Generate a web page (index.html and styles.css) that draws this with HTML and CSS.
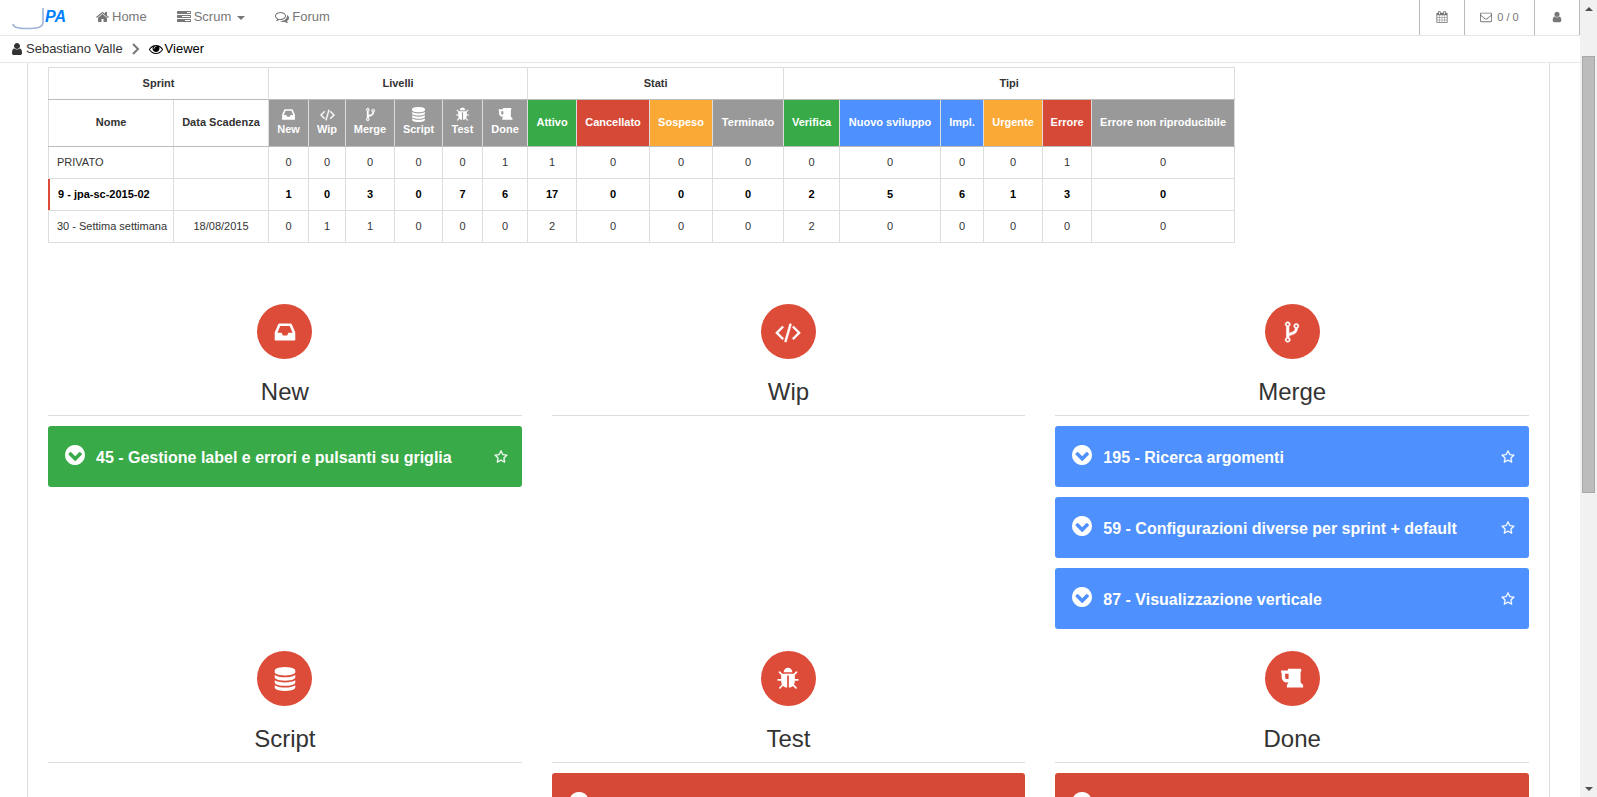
FILE: index.html
```html
<!DOCTYPE html>
<html lang="it">
<head>
<meta charset="utf-8">
<title>JPA - Viewer</title>
<link rel="stylesheet" href="styles.css">
</head>
<body>
<svg class="sprite" aria-hidden="true">
  <symbol id="home" viewBox="64 0 1664 1792"><path d="M1472 992v480q0 26-19 45t-45 19h-384v-384h-256v384h-384q-26 0-45-19t-19-45v-480q0-1 .5-3t.5-3l575-474 575 474q1 2 1 6zm223-69l-62 74q-8 9-21 11h-3q-13 0-21-7l-692-577-692 577q-12 8-24 7-13-2-21-11l-62-74q-8-10-7-23.5t11-21.5l719-599q32-26 76-26t76 26l244 204v-195q0-14 9-23t23-9h192q14 0 23 9t9 23v408l219 182q10 8 11 21.5t-7 23.5z"/></symbol>
  <symbol id="tasks" viewBox="0 0 1792 1792"><path d="M1024 1408h640v-128h-640v128zm-384-512h1024v-128h-1024v128zm640-512h384v-128h-384v128zm512 832v256q0 26-19 45t-45 19h-1664q-26 0-45-19t-19-45v-256q0-26 19-45t45-19h1664q26 0 45 19t19 45zm0-512v256q0 26-19 45t-45 19h-1664q-26 0-45-19t-19-45v-256q0-26 19-45t45-19h1664q26 0 45 19t19 45zm0-512v256q0 26-19 45t-45 19h-1664q-26 0-45-19t-19-45v-256q0-26 19-45t45-19h1664q26 0 45 19t19 45z"/></symbol>
  <symbol id="comments" viewBox="0 0 1792 1792"><path d="M704 384q-153 0-286 52t-211.5 141-78.5 191q0 82 53 158t149 132l97 56-35 84q34-20 62-39l44-31 53 10q78 14 153 14 153 0 286-52t211.500-141 78.500-191-78.500-191-211.500-141-286-52zm0-128q191 0 353.500 68.500t256.500 186.500 94 257-94 257-256.500 186.500-353.500 68.500q-86 0-176-16-124 88-278 128-36 9-86 16h-3q-11 0-20.500-8t-11.500-21q-1-3-1-6.500t.5-6.500 2-6l2.500-5 3.500-5.500 4-5 4.500-5 4-4.500q5-6 23-25t26-29.500 22.500-29 25-38.500 20.500-44q-124-72-195-177t-71-224q0-139 94-257t256.500-186.500 353.500-68.500zm822 1169q10 24 20.500 44t25 38.500 22.500 29 26 29.500 23 25q1 1 4 4.500t4.500 5 4 5 3.500 5.500l2.500 5 2 6 .5 6.500-1 6.500q-3 14-13 22t-22 7q-50-7-86-16-154-40-278-128-90 16-176 16-271 0-472-132 58 4 88 4 161 0 309-45t264-129q125-92 192-212t67-254q0-77-23-152 129 71 204 178t75 230q0 120-71 224.500t-195 176.500z"/></symbol>
  <symbol id="user" viewBox="256 0 1280 1792"><path d="M1536 1399q0 109-62.500 187t-150.500 78h-854q-88 0-150.500-78t-62.500-187q0-85 8.500-160.500t31.500-152 58.500-131 94-89 134.500-34.500q131 128 313 128t313-128q76 0 134.500 34.500t94 89 58.500 131 31.500 152 8.500 160.500zm-256-887q0 159-112.500 271.500t-271.500 112.500-271.500-112.500-112.500-271.500 112.500-271.500 271.500-112.500 271.500 112.500 112.500 271.500z"/></symbol>
  <symbol id="eye" viewBox="0 0 1792 1792"><path d="M1664 960q-152-236-381-353 61 104 61 225 0 185-131.500 316.500t-316.500 131.500-316.500-131.500-131.500-316.500q0-121 61-225-229 117-381 353 133 205 333.500 326.500t434.500 121.500 434.500-121.500 333.500-326.500zm-720-384q0-20-14-34t-34-14q-125 0-214.500 89.500t-89.500 214.500q0 20 14 34t34 14 34-14 14-34q0-86 61-147t147-61q20 0 34-14t14-34zm848 384q0 34-20 69-140 230-376.500 368.500t-499.500 138.500-499.500-139-376.500-368q-20-35-20-69t20-69q140-229 376.500-368t499.500-139 499.500 139 376.500 368q20 35 20 69z"/></symbol>
  <symbol id="calendar" viewBox="0 0 1792 1792"><path d="M192 1664h288v-288h-288v288zm352 0h320v-288h-320v288zm-352-352h288v-320h-288v320zm352 0h320v-320h-320v320zm-352-384h288v-288h-288v288zm736 736h320v-288h-320v288zm-384-736h320v-288h-320v288zm768 736h288v-288h-288v288zm-384-352h320v-320h-320v320zm-352-864v-288q0-13-9.500-22.500t-22.500-9.500h-64q-13 0-22.500 9.500t-9.500 22.500v288q0 13 9.500 22.500t22.500 9.500h64q13 0 22.500-9.500t9.500-22.500zm736 864h288v-320h-288v320zm-384-384h320v-288h-320v288zm384 0h288v-288h-288v288zm32-480v-288q0-13-9.500-22.500t-22.500-9.500h-64q-13 0-22.500 9.500t-9.500 22.500v288q0 13 9.500 22.500t22.500 9.500h64q13 0 22.500-9.500t9.500-22.500zm384-64v1280q0 52-38 90t-90 38h-1408q-52 0-90-38t-38-90v-1280q0-52 38-90t90-38h128v-96q0-66 47-113t113-47h64q66 0 113 47t47 113v96h384v-96q0-66 47-113t113-47h64q66 0 113 47t47 113v96h128q52 0 90 38t38 90z"/></symbol>
  <symbol id="envelope" viewBox="0 0 1792 1792"><path d="M1664 1504v-768q-32 36-69 66-268 206-426 338-51 43-83 67t-86.500 48.500-102.500 24.500h-2q-48 0-102.500-24.500t-86.500-48.500-83-67q-158-132-426-338-37-30-69-66v768q0 13 9.500 22.500t22.500 9.500h1472q13 0 22.500-9.500t9.500-22.500zm0-1051v-24.500l-.5-13-3-12.500-5.500-9-9-7.500-14-2.500h-1472q-13 0-22.500 9.500t-9.500 22.500q0 168 147 284 193 152 401 317 6 5 35 29.500t46 37.500 44.500 31.500 50.500 27.500 43 9h2q20 0 43-9t50.500-27.500 44.500-31.500 46-37.500 35-29.500q208-165 401-317 54-43 100.500-115.500t46.500-131.500zm128-37v1088q0 66-47 113t-113 47h-1472q-66 0-113-47t-47-113v-1088q0-66 47-113t113-47h1472q66 0 113 47t47 113z"/></symbol>
  <symbol id="inbox" viewBox="0 0 1792 1792"><path d="M1151 960h316q-1-3-2.500-8t-2.500-8l-212-496h-708l-212 496q-1 2-2.500 8t-2.500 8h316l95 192h320zm513 30v482q0 26-19 45t-45 19h-1408q-26 0-45-19t-19-45v-482q0-62 25-123l238-552q10-25 36.500-42t52.500-17h832q26 0 52.500 17t36.500 42l238 552q25 61 25 123z"/></symbol>
  <symbol id="code" viewBox="-64 0 1920 1792"><path stroke="currentColor" stroke-width="50" d="M553 1399l-50 50q-10 10-23 10t-23-10l-466-466q-10-10-10-23t10-23l466-466q10-10 23-10t23 10l50 50q10 10 10 23t-10 23l-393 393 393 393q10 10 10 23t-10 23zm591-1067l-373 1291q-4 13-15.500 19.500t-23.500 2.500l-62-17q-13-4-19.500-15.500t-2.500-24.500l373-1291q4-13 15.500-19.500t23.500-2.500l62 17q13 4 19.500 15.500t2.500 24.500zm657 651l-466 466q-10 10-23 10t-23-10l-50-50q-10-10-10-23t10-23l393-393-393-393q-10-10-10-23t10-23l50-50q10-10 23-10t23 10l466 466q10 10 10 23t-10 23z"/></symbol>
  <symbol id="fork" viewBox="0 0 1792 1792"><path stroke="currentColor" stroke-width="40" d="M672 1472q0-40-28-68t-68-28-68 28-28 68 28 68 68 28 68-28 28-68zm0-1152q0-40-28-68t-68-28-68 28-28 68 28 68 68 28 68-28 28-68zm640 128q0-40-28-68t-68-28-68 28-28 68 28 68 68 28 68-28 28-68zm96 0q0 52-26 96.500t-70 69.500q-2 287-226 414-67 38-203 81-128 40-169.500 71t-41.500 100v26q44 25 70 69.500t26 96.500q0 80-56 136t-136 56-136-56-56-136q0-52 26-96.500t70-69.500v-820q-44-25-70-69.500t-26-96.500q0-80 56-136t136-56 136 56 56 136q0 52-26 96.500t-70 69.500v497q54-26 154-57 55-17 87.500-29.500t70.500-31 59-39.500 40.500-51 28-69.500 8.500-91.500q-44-25-70-69.500t-26-96.500q0-80 56-136t136-56 136 56 56 136z"/></symbol>
  <symbol id="database" viewBox="0 0 1792 1792"><path d="M896 768q237 0 443-43t325-127v170q0 69-103 128t-280 93.500-385 34.500-385-34.500-280-93.500-103-128v-170q119 84 325 127t443 43zm0 768q237 0 443-43t325-127v170q0 69-103 128t-280 93.500-385 34.500-385-34.500-280-93.500-103-128v-170q119 84 325 127t443 43zm0-384q237 0 443-43t325-127v170q0 69-103 128t-280 93.500-385 34.500-385-34.500-280-93.500-103-128v-170q119 84 325 127t443 43zm0-1152q208 0 385 34.500t280 93.500 103 128v128q0 69-103 128t-280 93.500-385 34.500-385-34.500-280-93.500-103-128v-128q0-69 103-128t280-93.500 385-34.500z"/></symbol>
  <symbol id="bug" viewBox="0 0 1792 1792"><path d="M1696 960q0 26-19 45t-45 19h-224q0 171-67 290l208 209q19 19 19 45t-19 45q-18 19-45 19t-45-19l-198-197q-5 5-15 13t-42 28.500-65 36.500-82 29-97 13v-896h-128v896q-51 0-101.500-13.500t-87-33-66-39-43.500-32.500l-15-14-183 207q-20 21-48 21-24 0-43-16-19-18-20.500-44.500t15.500-46.500l202-227q-58-114-58-274h-224q-26 0-45-19t-19-45 19-45 45-19h224v-294l-173-173q-19-19-19-45t19-45 45-19 45 19l173 173h844l173-173q19-19 45-19t45 19 19 45-19 45l-173 173v294h224q26 0 45 19t19 45zm-480-576h-640q0-133 93.500-226.500t226.500-93.500 226.500 93.500 93.500 226.500z"/></symbol>
  <symbol id="beer" viewBox="0 0 1792 1792"><path d="M640 896v-384h-256v256q0 53 37.500 90.500t90.500 37.500h128zm1088 448v192h-1216v-192l128-192h-128q-159 0-271.500-112.500t-112.500-271.500v-320l-64-64 32-128h480l32-128h960l32 192-64 32v800z"/></symbol>
  <symbol id="star" viewBox="0 0 1792 1792"><path stroke="currentColor" stroke-width="40" d="M1201 1004l306-297-422-62-189-382-189 382-422 62 306 297-73 421 378-199 377 199zm527-357q0 22-26 48l-363 354 86 500q1 7 1 20 0 50-41 50-19 0-40-12l-449-236-449 236q-22 12-40 12-21 0-31.500-14.500t-10.500-35.500q0-6 2-20l86-500-364-354q-25-27-25-48 0-37 56-46l502-73 225-455q19-41 49-41t49 41l225 455 502 73q56 9 56 46z"/></symbol>
  <symbol id="down" viewBox="128 128 1536 1536"><path d="M957 1331l454-454q19-19 19-45t-19-45l-102-102q-19-19-45-19t-45 19l-307 307-307-307q-19-19-45-19t-45 19l-102 102q-19 19-19 45t19 45l454 454q19 19 45 19t45-19zm707-435q0 209-103 385.500t-279.500 279.500-385.500 103-385.500-103-279.500-279.500-103-385.500 103-385.500 279.500-279.500 385.500-103 385.500 103 279.500 279.500 103 385.500z"/></symbol>
</svg>

<div class="page">
  <header class="navbar">
    <a class="brand" href="#" aria-label="JPA">
      <svg class="swoosh" viewBox="0 0 33 22" aria-hidden="true"><path d="M31 0V14C31 20 24 20.500 14 20.500C6 20.500 1 19.500 1 16" fill="none" stroke="#9db3d8" stroke-width="1.600"/></svg><span class="brand-text">PA</span>
    </a>
    <nav class="menu">
      <a href="#"><svg class="icon w13"><use href="#home"/></svg>Home</a>
      <a href="#"><svg class="icon"><use href="#tasks"/></svg>Scrum<span class="caret"></span></a>
      <a href="#"><svg class="icon"><use href="#comments"/></svg>Forum</a>
    </nav>
    <div class="tools">
      <a class="tool" href="#" aria-label="Calendario"><svg class="icon small"><use href="#calendar"/></svg></a>
      <a class="tool mail" href="#"><svg class="icon small"><use href="#envelope"/></svg>0 / 0</a>
      <a class="tool" href="#" aria-label="Utente"><svg class="icon small"><use href="#user"/></svg></a>
    </div>
  </header>

  <nav class="crumbs" aria-label="Percorso">
    <a href="#"><svg class="icon w10"><use href="#user"/></svg>Sebastiano Valle</a>
    <svg class="sep" viewBox="0 0 8 12" aria-hidden="true"><path d="M1 1l5 5-5 5" fill="none" stroke="#777" stroke-width="2"/></svg>
    <a class="current" href="#"><svg class="icon"><use href="#eye"/></svg>Viewer</a>
  </nav>

  <main class="content">
    <table class="summary">
      <colgroup>
        <col style="width:125px"><col style="width:95px">
        <col style="width:40px"><col style="width:37px"><col style="width:49px"><col style="width:48px"><col style="width:40px"><col style="width:45px">
        <col style="width:49px"><col style="width:73px"><col style="width:63px"><col style="width:71px">
        <col style="width:56px"><col style="width:101px"><col style="width:43px"><col style="width:59px"><col style="width:49px"><col style="width:143px">
      </colgroup>
      <thead>
        <tr><th colspan="2">Sprint</th><th colspan="6">Livelli</th><th colspan="4">Stati</th><th colspan="6">Tipi</th></tr>
        <tr class="names">
          <th>Nome</th><th>Data Scadenza</th>
          <th class="grey"><svg><use href="#inbox"/></svg>New</th>
          <th class="grey"><svg><use href="#code"/></svg>Wip</th>
          <th class="grey"><svg><use href="#fork"/></svg>Merge</th>
          <th class="grey"><svg><use href="#database"/></svg>Script</th>
          <th class="grey"><svg><use href="#bug"/></svg>Test</th>
          <th class="grey"><svg><use href="#beer"/></svg>Done</th>
          <th class="green">Attivo</th><th class="red">Cancellato</th><th class="orange">Sospeso</th><th class="grey">Terminato</th>
          <th class="green">Verifica</th><th class="blue">Nuovo sviluppo</th><th class="blue">Impl.</th><th class="orange">Urgente</th><th class="red">Errore</th><th class="grey">Errore non riproducibile</th>
        </tr>
      </thead>
      <tbody>
        <tr><td>PRIVATO</td><td></td><td>0</td><td>0</td><td>0</td><td>0</td><td>0</td><td>1</td><td>1</td><td>0</td><td>0</td><td>0</td><td>0</td><td>0</td><td>0</td><td>0</td><td>1</td><td>0</td></tr>
        <tr class="active"><td>9 - jpa-sc-2015-02</td><td></td><td>1</td><td>0</td><td>3</td><td>0</td><td>7</td><td>6</td><td>17</td><td>0</td><td>0</td><td>0</td><td>2</td><td>5</td><td>6</td><td>1</td><td>3</td><td>0</td></tr>
        <tr><td>30 - Settima settimana</td><td>18/08/2015</td><td>0</td><td>1</td><td>1</td><td>0</td><td>0</td><td>0</td><td>2</td><td>0</td><td>0</td><td>0</td><td>2</td><td>0</td><td>0</td><td>0</td><td>0</td><td>0</td></tr>
      </tbody>
    </table>

    <div class="board">
      <section class="level">
        <div class="badge"><svg><use href="#inbox"/></svg></div>
        <h2>New</h2>
        <article class="card green"><button class="toggle" aria-label="Espandi"><svg><use href="#down"/></svg></button><h3>45 - Gestione label e errori e pulsanti su griglia</h3><button class="fav" aria-label="Preferito"><svg><use href="#star"/></svg></button></article>
      </section>
      <section class="level">
        <div class="badge"><svg class="wide"><use href="#code"/></svg></div>
        <h2>Wip</h2>
      </section>
      <section class="level">
        <div class="badge"><svg><use href="#fork"/></svg></div>
        <h2>Merge</h2>
        <article class="card blue"><button class="toggle" aria-label="Espandi"><svg><use href="#down"/></svg></button><h3>195 - Ricerca argomenti</h3><button class="fav" aria-label="Preferito"><svg><use href="#star"/></svg></button></article>
        <article class="card blue"><button class="toggle" aria-label="Espandi"><svg><use href="#down"/></svg></button><h3>59 - Configurazioni diverse per sprint + default</h3><button class="fav" aria-label="Preferito"><svg><use href="#star"/></svg></button></article>
        <article class="card blue"><button class="toggle" aria-label="Espandi"><svg><use href="#down"/></svg></button><h3>87 - Visualizzazione verticale</h3><button class="fav" aria-label="Preferito"><svg><use href="#star"/></svg></button></article>
      </section>
      <section class="level">
        <div class="badge"><svg><use href="#database"/></svg></div>
        <h2>Script</h2>
      </section>
      <section class="level">
        <div class="badge"><svg><use href="#bug"/></svg></div>
        <h2>Test</h2>
        <article class="card red"><button class="toggle" aria-label="Espandi"><svg><use href="#down"/></svg></button></article>
      </section>
      <section class="level">
        <div class="badge"><svg><use href="#beer"/></svg></div>
        <h2>Done</h2>
        <article class="card red"><button class="toggle" aria-label="Espandi"><svg><use href="#down"/></svg></button></article>
      </section>
    </div>
  </main>
</div>

<div class="scrollbar" aria-hidden="true">
  <span class="arrow up"></span>
  <span class="track"><span class="thumb"></span></span>
  <span class="arrow down"></span>
</div>
</body>
</html>
```

FILE: styles.css
```css
* { box-sizing: border-box; }

body {
  margin: 0;
  height: 100vh;
  display: flex;
  overflow: hidden;
  background: #fff;
  color: #333;
  font: 13px/20px "Liberation Sans", Arial, sans-serif;
}

a { color: inherit; text-decoration: none; }
button { border: 0; padding: 0; background: none; color: inherit; }
svg { fill: currentColor; display: block; }
.sprite { position: absolute; width: 0; height: 0; }

.page {
  flex: 1;
  min-width: 0;
  display: flex;
  flex-direction: column;
}

.icon { width: 14px; height: 14px; flex: none; }
.icon.w13 { width: 13px; }
.icon.w10 { width: 10px; }
.icon.small { width: 12px; height: 12px; }

/* top bar */
.navbar {
  flex: none;
  height: 36px;
  display: flex;
  border-bottom: 1px solid #e7e7e7;
  color: #777;
}
.brand { display: flex; width: 81px; padding: 8px 0 0 12px; }
.swoosh { width: 33px; height: 22px; }
.brand-text { color: #007fff; font: italic bold 16px/18px "Liberation Sans", Arial, sans-serif; }
.menu { display: flex; }
.menu a { display: flex; align-items: center; gap: 3px; padding: 0 15px 2px; }
.caret {
  margin: 3px 0 0 3px;
  border: 4px solid transparent;
  border-top-color: currentColor;
  border-bottom: 0;
}
.tools { display: flex; margin-left: auto; border-right: 1px solid #bbb; }
.tool {
  display: flex;
  align-items: center;
  justify-content: center;
  gap: 5px;
  width: 45px;
  padding-bottom: 1px;
  border-left: 1px solid #bbb;
  font-size: 11px;
}
.tool.mail { width: 70px; }

/* breadcrumb */
.crumbs {
  flex: none;
  height: 27px;
  display: flex;
  align-items: center;
  padding: 0 12px;
  border-bottom: 1px solid #e7e7e7;
}
.crumbs a { display: flex; align-items: center; gap: 4px; }
.crumbs .current { color: #000; gap: 2px; }
.sep { width: 8px; height: 12px; margin: 0 9px; }

/* content */
.content {
  flex: 1;
  min-height: 0;
  margin: 0 30px 0 27px;
  padding: 4px 20px 0;
  border: solid #ddd;
  border-width: 0 1px;
}

.summary {
  width: 1186px;
  table-layout: fixed;
  border-collapse: collapse;
  font-size: 11px;
  line-height: 15px;
}
.summary th, .summary td {
  height: 32px;
  padding: 8px 0;
  border: 1px solid #ddd;
  text-align: center;
  vertical-align: middle;
  white-space: nowrap;
}
.summary thead th { border-bottom-color: #bbb; }
.summary .names th { padding: 7px 0 9px; }
.summary th svg { width: 15px; height: 15px; margin: 0 auto; }
.summary td:first-child { padding-left: 8px; text-align: left; }
.summary .active { color: #000; font-weight: bold; }
.summary .active td:first-child {
  padding-left: 9px;
  border-left-color: #dd4b39;
  box-shadow: inset 1px 0 #dd4b39;
}

.green { background: #38aa47; color: #fff; }
.red { background: #d64937; color: #fff; }
.orange { background: #faa937; color: #fff; }
.blue { background: #4d90fe; color: #fff; }
.grey { background: #999; color: #fff; }

/* board */
.board {
  display: grid;
  grid-template-columns: repeat(3, minmax(0, 1fr));
  gap: 22px 30px;
  margin-top: 61px;
}
.badge {
  display: flex;
  align-items: center;
  justify-content: center;
  width: 55px;
  height: 55px;
  margin: 0 auto;
  padding-top: 1px;
  border-radius: 50%;
  background: #dd4b39;
  color: #fff;
}
.badge svg { width: 24px; height: 24px; }
.badge .wide { width: 26px; }
.level h2 {
  margin: 20px 0 0;
  padding-bottom: 10px;
  border-bottom: 1px solid #ddd;
  font-size: 24px;
  line-height: 26px;
  font-weight: normal;
  text-align: center;
}
.card {
  display: flex;
  align-items: center;
  min-height: 61px;
  margin-top: 10px;
  padding: 0 14px 0 17px;
  border-radius: 3px;
}
.card h3 { margin: 0 0 0 11px; padding-top: 2px; flex: 1; font-size: 16px; line-height: 20px; }
.toggle { padding-bottom: 3px; }
.toggle svg { width: 20px; height: 20px; }
.fav svg { width: 14px; height: 14px; }

/* scrollbar */
.scrollbar {
  flex: none;
  width: 17px;
  display: flex;
  flex-direction: column;
  background: #f1f1f1;
}
.arrow { height: 17px; display: flex; align-items: center; justify-content: center; }
.arrow::before { content: ""; border: 4px solid transparent; }
.arrow.up::before { border-bottom-color: #505050; border-top: 0; }
.arrow.down::before { border-top-color: #505050; border-bottom: 0; }
.track { flex: 1; display: flex; flex-direction: column; padding: 39px 2px 287px; }
.thumb { flex: 1; background: #bcbcbc; border: 1px solid #a8a8a8; }
```
